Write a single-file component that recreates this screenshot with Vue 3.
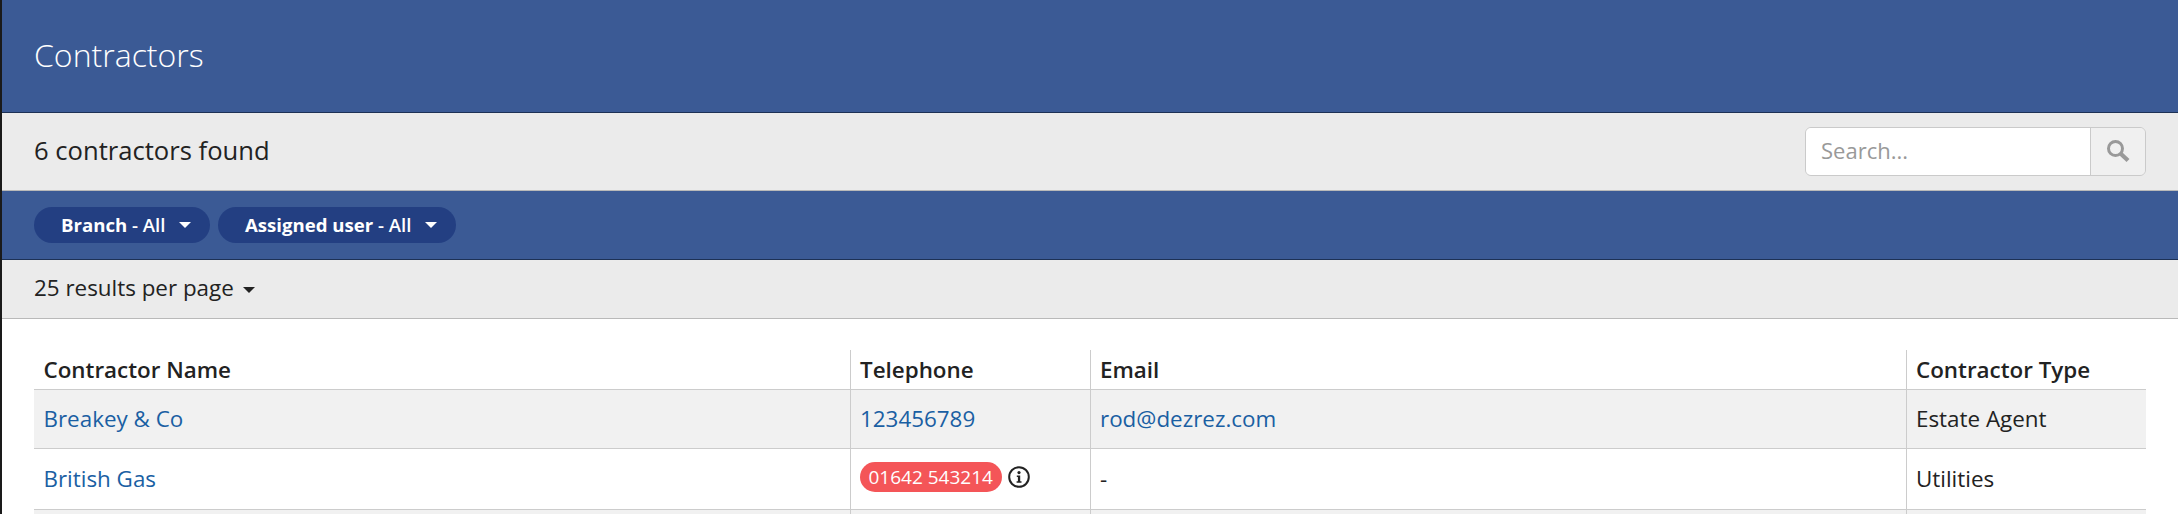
<script setup>
const rows = [
  { name: 'Breakey & Co', phone: '123456789', email: 'rod@dezrez.com', type: 'Estate Agent' },
  { name: 'British Gas', bad: '01642 543214', email: '-', type: 'Utilities' },
  { name: '', email: '', type: '' }
]
</script>

<template>
  <div class="page">
    <header class="title"><h1>Contractors</h1></header>
    <section class="found">
      <span>6 contractors found</span>
      <div class="search">
        <input placeholder="Search..." />
        <button aria-label="Search">
          <svg width="24" height="24" viewBox="0 0 24 24"><circle cx="9.5" cy="9.5" r="7" fill="none" stroke="#999" stroke-width="3"/><path d="M14.5 14.5 22 21.5" stroke="#999" stroke-width="4.2" fill="none"/></svg>
        </button>
      </div>
    </section>
    <section class="filters">
      <button class="pill"><b>Branch</b> - All<i class="caret"></i></button>
      <button class="pill"><b>Assigned user</b> - All<i class="caret"></i></button>
    </section>
    <section class="perpage">25 results per page<i class="caret dark"></i></section>
    <main class="content">
      <table>
        <colgroup><col class="c1" /><col class="c2" /><col class="c3" /><col /></colgroup>
        <thead>
          <tr><th>Contractor Name</th><th>Telephone</th><th>Email</th><th>Contractor Type</th></tr>
        </thead>
        <tbody>
          <tr v-for="r in rows" :key="r.name">
            <td><a>{{ r.name }}</a></td>
            <td>
              <a v-if="r.phone">{{ r.phone }}</a>
              <span v-if="r.bad" class="badphone"><span class="badge">{{ r.bad }}</span>
                <svg class="info" width="24" height="24" viewBox="0 0 24 24"><circle cx="12" cy="12" r="9.8" fill="none" stroke="#222" stroke-width="2"/><circle cx="12" cy="7.6" r="1.6" fill="#222"/><path d="M9.8 10.6h3.4v5.6h1.3v1.5H9.6v-1.5h1.3v-4.1H9.8z" fill="#222"/></svg>
              </span>
            </td>
            <td><a v-if="r.email.includes('@')">{{ r.email }}</a><template v-else>{{ r.email }}</template></td>
            <td>{{ r.type }}</td>
          </tr>
        </tbody>
      </table>
    </main>
  </div>
</template>

<style>
html, body { margin: 0; height: 514px; overflow: hidden; background: #fff; }
</style>

<style scoped>
.page { height: 514px; overflow: hidden; border-left: 2px solid #1a1a1a; font-family: "Open Sans", sans-serif; color: #222; box-sizing: border-box; }
.title { height: 112px; background: #3b5a95; border-bottom: 1px solid #1d3155; display: flex; align-items: center; padding-left: 32px; }
h1 { margin: 0 0 3px; font-weight: 300; font-size: 32px; line-height: 40px; color: #fff; }
.found { height: 77px; background: #ebebeb; border-bottom: 1px solid #b9b9b9; display: flex; align-items: center; justify-content: space-between; padding: 0 32px; font-size: 25.6px; line-height: 34px; }
.found > span { margin-top: -2px; }
.search { display: flex; height: 49px; width: 341px; box-sizing: border-box; border: 1px solid #cacaca; border-radius: 6px; overflow: hidden; }
.search input { flex: 1; min-width: 0; border: 0; outline: 0; padding: 0 0 3px 15px; font: 22px "Open Sans", sans-serif; background: #fff; }
.search input::placeholder { color: #999; opacity: 1; }
.search button { width: 55px; border: 0; border-left: 1px solid #cacaca; background: #f0f0f0; padding: 0 0 2px; display: flex; align-items: center; justify-content: center; }
.filters { height: 68px; background: #3b5a95; border-bottom: 1px solid #1d3155; display: flex; align-items: center; gap: 8px; padding-left: 32px; }
.pill { height: 36px; border: 0; border-radius: 18px; background: #233f82; color: #fff; padding: 0 18.5px 2px 27px; font: 600 18.6px "Open Sans", sans-serif; display: flex; align-items: center; white-space: pre; }
.pill b { font-weight: 700; }
.caret { display: inline-block; width: 0; height: 0; border: 6px solid transparent; border-top-color: #fff; border-bottom: 0; margin-left: 14px; margin-top: 2px; }
.caret.dark { border-top-color: #222; margin-left: 9px; margin-top: 0; vertical-align: middle; }
.perpage { height: 58px; line-height: 56px; background: #ebebeb; border-bottom: 1px solid #b9b9b9; padding-left: 32px; font-size: 22.4px; }
.content { padding: 0 32px; }
table { width: 2112px; border-collapse: collapse; table-layout: fixed; margin-top: 31px; font-size: 22.4px; }
.c1 { width: 816px; } .c2 { width: 240px; } .c3 { width: 816px; }
th { height: 39px; padding: 0 10px 0 9.5px; box-sizing: border-box; text-align: left; font-weight: 600; border-bottom: 1px solid #ccc; }
td { height: 59px; box-sizing: border-box; padding: 0 10px 1px 9.5px; border-bottom: 1px solid #ccc; }
th + th, td + td { border-left: 1px solid #ccc; }
tbody tr:nth-child(odd) td { background: #f1f1f1; }
tbody tr:nth-child(2) td { height: 61px; }
a { color: #1a5fa3; }
.badphone { display: flex; align-items: center; gap: 5px; margin: 0 0 3px -0.5px; }
.badge { background: #f45558; color: #fff; border-radius: 15px; height: 30px; line-height: 30px; padding: 0 9px; font-size: 19px; }
</style>
